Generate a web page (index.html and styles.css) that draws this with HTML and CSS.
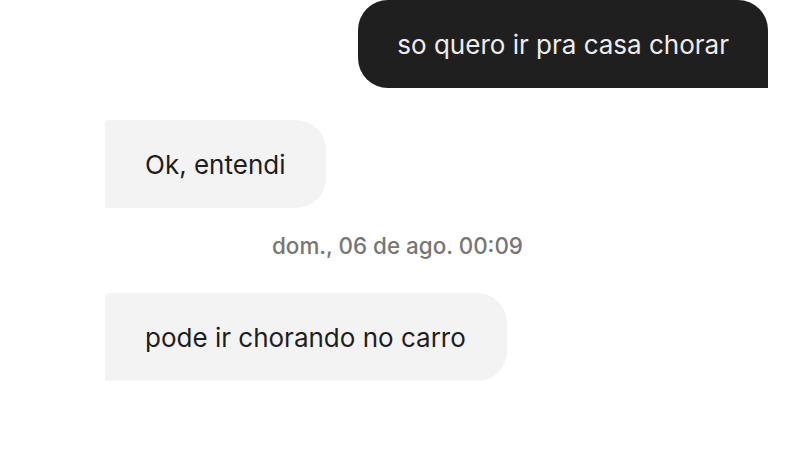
FILE: index.html
```html
<!DOCTYPE html>
<html lang="pt">
<head>
<meta charset="utf-8">
<link rel="stylesheet" href="styles.css">
</head>
<body>
<main class="chat">
  <div class="bubble sent">so quero ir pra casa chorar</div>
  <div class="bubble received first">Ok, entendi</div>
  <div class="stamp">dom., 06 de ago. 00:09</div>
  <div class="bubble received">pode ir chorando no carro</div>
</main>
</body>
</html>
```
FILE: styles.css
```css
html, body {
  margin: 0;
  padding: 0;
  background: #ffffff;
}
body {
  width: 800px;
  height: 450px;
  overflow: hidden;
  font-family: Inter, Roboto, "Liberation Sans", sans-serif;
}
.chat {
  display: flex;
  flex-direction: column;
  align-items: flex-start;
  padding: 0 32px 0 105px;
}
.bubble {
  height: 88px;
  box-sizing: border-box;
  padding: 0 41px 0 40px;
  display: flex;
  align-items: center;
  font-size: 26px;
  letter-spacing: 0;
}
.sent {
  align-self: flex-end;
  background: #1f1f1f;
  color: #ececec;
  border-radius: 30px 30px 0 30px;
  padding: 0 39px;
}
.received {
  background: #f3f3f3;
  color: #1e1e1e;
  border-radius: 4px 30px 30px 0;
}
.first {
  margin-top: 32px;
}
.stamp {
  align-self: stretch;
  margin-left: -105px;
  margin-right: -32px;
  padding-right: 5px;
  text-align: center;
  font-size: 22.4px;
  font-weight: 500;
  color: #767676;
  margin-top: 24px;
  margin-bottom: 34px;
  line-height: 27px;
}
```
